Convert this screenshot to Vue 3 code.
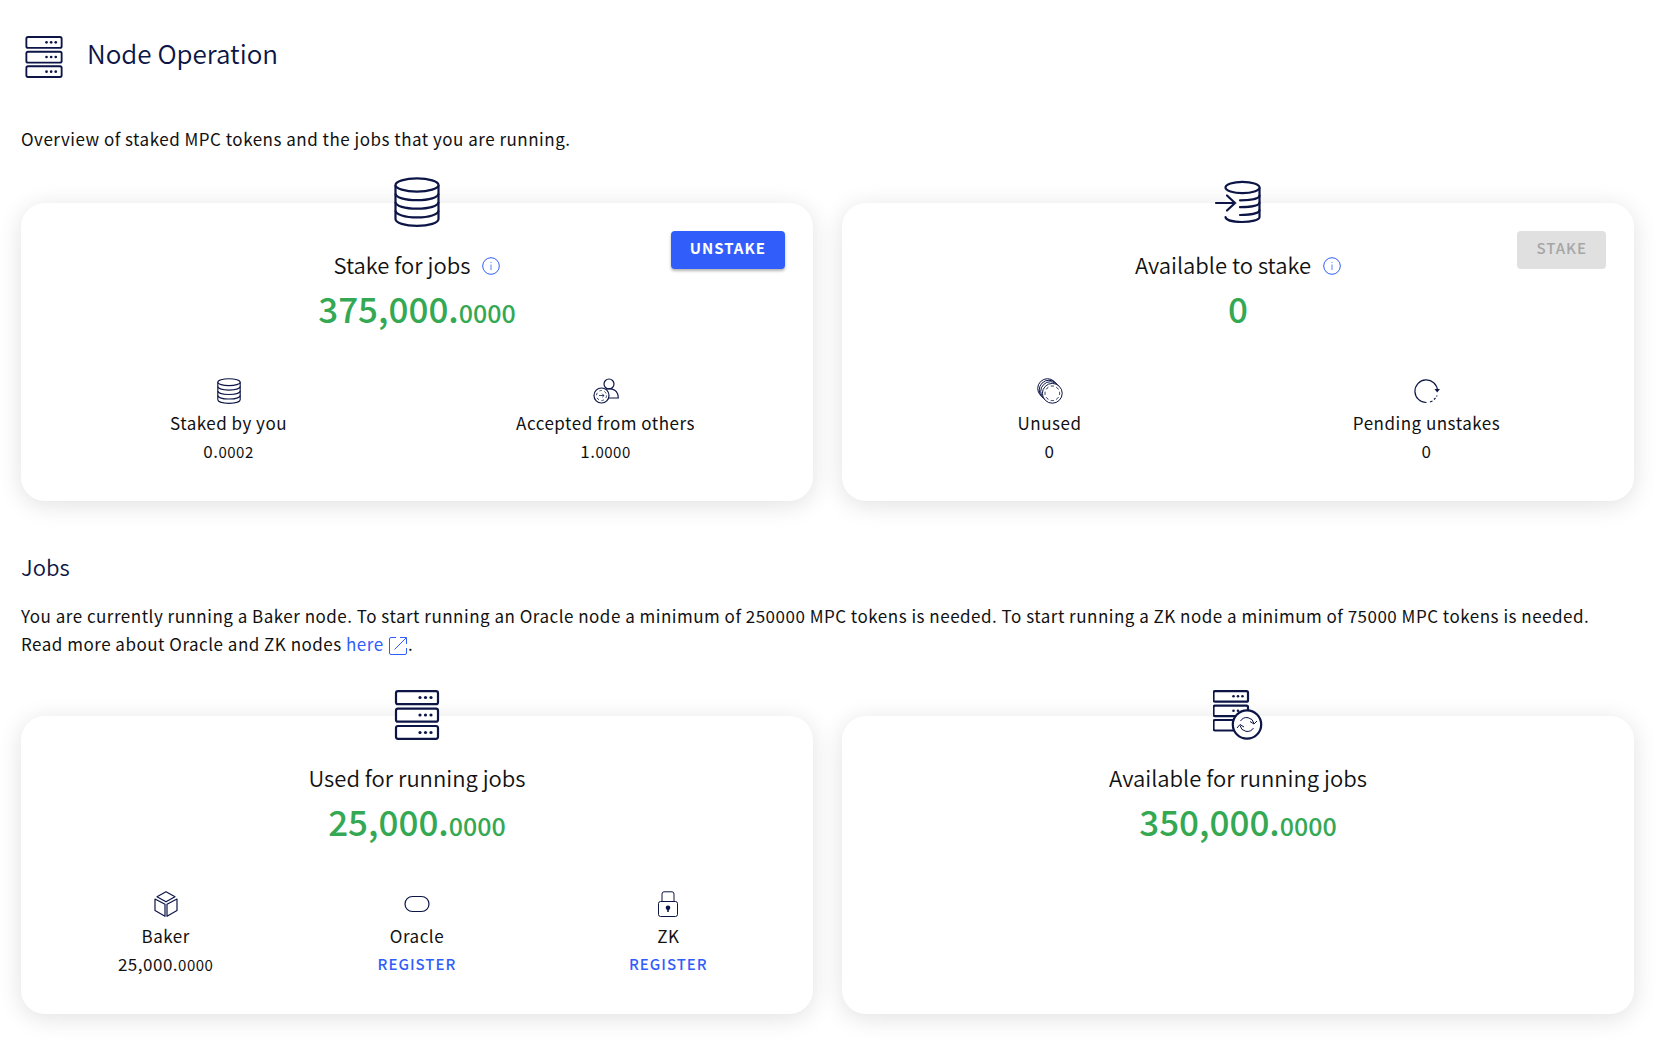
<script setup>
const stakes = [
  {
    id: 'staked',
    icon: 'stack',
    title: 'Stake for jobs',
    info: true,
    whole: '375,000.',
    decimals: '0000',
    action: { label: 'Unstake', disabled: false },
    items: [
      { icon: 'stack', label: 'Staked by you', whole: '0.', decimals: '0002' },
      { icon: 'others', label: 'Accepted from others', whole: '1.', decimals: '0000' },
    ],
  },
  {
    id: 'available',
    icon: 'deposit',
    title: 'Available to stake',
    info: true,
    whole: '0',
    action: { label: 'Stake', disabled: true },
    items: [
      { icon: 'coins', label: 'Unused', whole: '0' },
      { icon: 'pending', label: 'Pending unstakes', whole: '0' },
    ],
  },
]

const jobs = [
  {
    id: 'used',
    icon: 'servers',
    title: 'Used for running jobs',
    whole: '25,000.',
    decimals: '0000',
    items: [
      { icon: 'cube', label: 'Baker', whole: '25,000.', decimals: '0000' },
      { icon: 'oracle', label: 'Oracle', register: true },
      { icon: 'lock', label: 'ZK', register: true },
    ],
  },
  {
    id: 'free',
    icon: 'refresh',
    title: 'Available for running jobs',
    whole: '350,000.',
    decimals: '0000',
    items: [],
  },
]

const sections = { stakes, jobs }
</script>

<template>
  <svg class="symbols" aria-hidden="true">
    <symbol id="servers" viewBox="0 0 50 50">
      <g fill="#fff" stroke="currentColor" stroke-width="2.200">
        <rect x="4" y="1.200" width="42" height="13" rx="2" />
        <rect x="4" y="18.700" width="42" height="13" rx="2" />
        <rect x="4" y="36" width="42" height="12.800" rx="2" />
      </g>
      <g fill="currentColor">
        <circle cx="28" cy="7.500" r="1.600" /><circle cx="33.500" cy="7.500" r="1.600" /><circle cx="39" cy="7.500" r="1.600" />
        <circle cx="28" cy="25" r="1.600" /><circle cx="33.500" cy="25" r="1.600" /><circle cx="39" cy="25" r="1.600" />
        <circle cx="28" cy="42.500" r="1.600" /><circle cx="33.500" cy="42.500" r="1.600" /><circle cx="39" cy="42.500" r="1.600" />
      </g>
    </symbol>
    <symbol id="stack" viewBox="0 0 50 50">
      <g fill="#fff" stroke="currentColor" stroke-width="2.200">
        <path d="M3.500 8V42C3.500 46 13 48.800 25 48.800S46.500 46 46.500 42V8" />
        <ellipse cx="25" cy="8" rx="21.500" ry="6.600" />
        <path fill="none" d="M3.500 16.500C3.500 20.500 13 23.200 25 23.200S46.500 20.500 46.500 16.500M3.500 25C3.500 29 13 31.700 25 31.700S46.500 29 46.500 25M3.500 33.500C3.500 37.500 13 40.400 25 40.400S46.500 37.500 46.500 33.500" />
      </g>
    </symbol>
    <symbol id="deposit" viewBox="0 0 50 50">
      <path fill="#fff" d="M12 10H46V44H12z" />
      <g fill="#fff" stroke="currentColor" stroke-width="2.200" stroke-linecap="round">
        <path fill="none" d="M12.500 40C13 43 20 45 29 45S46.500 43 46.500 40V11" />
        <ellipse cx="29.500" cy="10.500" rx="17" ry="5.700" />
        <path fill="none" d="M27 23.300C36 23.300 46.500 22 46.500 18.500M27 30.200C36 30.200 46.500 29 46.500 25.500M27 38C36 38 46.500 36.500 46.500 33M3 26H22M14 18.500L22 26L14 33.500" />
      </g>
    </symbol>
    <symbol id="refresh" viewBox="1.500 0 50 50">
      <g fill="#fff" stroke="currentColor" stroke-width="2.200">
        <rect x="2" y="1.200" width="34.500" height="10.500" rx="1.500" />
        <rect x="2" y="15.700" width="34.500" height="10.500" rx="1.500" />
        <rect x="2" y="30" width="34.500" height="10.500" rx="1.500" />
      </g>
      <g fill="currentColor">
        <circle cx="22" cy="6.300" r="1.300" /><circle cx="26.500" cy="6.300" r="1.300" /><circle cx="31" cy="6.300" r="1.300" />
        <circle cx="22" cy="20.700" r="1.300" /><circle cx="26.500" cy="20.700" r="1.300" />
      </g>
      <circle cx="35.500" cy="34.500" r="14.200" fill="#fff" stroke="currentColor" stroke-width="2.200" />
      <path fill="none" stroke="currentColor" d="M29 31A7.400 7.400 0 0 1 42.500 33.500M38.500 31.500L42.500 34L45.500 31M42 38A7.400 7.400 0 0 1 28.500 35.500M25.500 38L28.500 34.500L32.500 37" />
    </symbol>
    <symbol id="others" viewBox="0 0 26 26">
      <g fill="none" stroke="currentColor" stroke-width="1.200">
        <circle cx="16" cy="6" r="5" />
        <path d="M13 11C20 9.500 25.300 13 25.300 20H16" />
        <circle cx="8.500" cy="17.500" r="7.500" fill="#fff" />
        <circle cx="8.500" cy="17.500" r="5" stroke-dasharray="2.500 2.700" stroke-width=".8" />
        <path stroke-width=".8" d="M6 17.500H11M9.200 15.700L11 17.500L9.200 19.300" />
      </g>
    </symbol>
    <symbol id="coins" viewBox="0 0 26 26">
      <g fill="#fff" stroke="currentColor">
        <circle cx="10.500" cy="10.500" r="9.800" />
        <circle cx="12" cy="12" r="9.800" />
        <circle cx="13.500" cy="13.500" r="9.800" />
        <circle cx="15.300" cy="15.300" r="9.900" />
        <circle cx="15.300" cy="15.300" r="7.300" stroke-width=".9" stroke-dasharray="3.200 2.500" stroke-dashoffset="1.600" />
      </g>
    </symbol>
    <symbol id="pending" viewBox="0 0 26 26">
      <g fill="none" stroke="currentColor" stroke-width="1.200">
        <path d="M12.500 24.500A11.300 11.300 0 1 1 23.500 12.500" />
        <path d="M16 24L18.500 23M20 21.500L21.500 20M22.500 18.500L23.200 17.500" />
      </g>
      <path fill="currentColor" d="M20.500 11H26L23.200 14.500z" />
    </symbol>
    <symbol id="cube" viewBox="0 0 26 26">
      <path fill="none" stroke="currentColor" stroke-width="1.200" stroke-linejoin="round" d="M13 .8L22 5.800L13 10.800L4 5.800zM2 8L12 13.300V25.300L2 19.600zM24 8L14 13.300V25.300L24 19.600z" />
    </symbol>
    <symbol id="oracle" viewBox="0 0 26 26">
      <rect x="1" y="5.500" width="24" height="15" rx="7.500" fill="none" stroke="currentColor" stroke-width="1.200" />
    </symbol>
    <symbol id="lock" viewBox="0 0 26 26">
      <rect x="3.500" y="10.500" width="19" height="15" rx="2" fill="none" stroke="currentColor" />
      <path fill="none" stroke="currentColor" d="M7 10.500V3Q7 .800 9 .800H17Q19 .800 19 3V10.500" />
      <circle cx="13" cy="16.800" r="2.300" fill="currentColor" />
      <path stroke="currentColor" stroke-width="1.600" d="M13 17V21" />
    </symbol>
  </svg>

  <main class="page">
    <header class="page-header">
      <svg class="page-icon" aria-hidden="true"><use href="#servers" /></svg>
      <h1>Node Operation</h1>
    </header>

    <template v-for="(cards, name) in sections" :key="name">
      <p v-if="name === 'stakes'" class="intro">
        Overview of staked MPC tokens and the jobs that you are running.
      </p>
      <section v-else class="jobs">
        <h2>Jobs</h2>
        <p>
          You are currently running a Baker node. To start running an Oracle node a minimum of
          250000 MPC tokens is needed. To start running a ZK node a minimum of 75000 MPC tokens is
          needed. Read more about Oracle and ZK nodes
          <a href="#nodes">here <svg class="external" viewBox="0 0 18 18" aria-hidden="true"><path d="M7 .5H2Q.5 .5 .5 2V16Q.5 17.500 2 17.500H16Q17.500 17.500 17.500 16V11M5.500 12.500L17 1M11 .5H17.500V7" /></svg></a>.
        </p>
      </section>

      <div class="cards">
        <article v-for="card in cards" :key="card.id" class="card">
          <svg class="card-icon" aria-hidden="true"><use :href="'#' + card.icon" /></svg>
          <button
            v-if="card.action"
            type="button"
            class="action"
            :disabled="card.action.disabled"
          >{{ card.action.label }}</button>
          <h3>
            {{ card.title }}
            <svg v-if="card.info" class="info" viewBox="0 0 18 18" aria-hidden="true">
              <circle cx="9" cy="9" r="8.300" />
              <path stroke-width=".8" d="M9 7.500V13M9 5V6" />
            </svg>
          </h3>
          <p class="total">{{ card.whole }}<small v-if="card.decimals">{{ card.decimals }}</small></p>
          <ul v-if="card.items.length" class="items">
            <li v-for="item in card.items" :key="item.label">
              <svg class="item-icon" aria-hidden="true"><use :href="'#' + item.icon" /></svg>
              <span>{{ item.label }}</span>
              <button v-if="item.register" type="button" class="register">Register</button>
              <span v-else class="value">{{ item.whole }}<small v-if="item.decimals">{{ item.decimals }}</small></span>
            </li>
          </ul>
        </article>
      </div>
    </template>
  </main>
</template>

<style>
body {
  margin: 0;
  background: #fff;
}
</style>

<style scoped>
.symbols {
  position: absolute;
  width: 0;
  height: 0;
}

.page {
  padding: 32px 28px 40px 21px;
  color: #111;
  font-family: "Noto Sans CJK SC", "Noto Sans", sans-serif;
  font-size: 17px;
  font-weight: 400;
  line-height: 28px;
  letter-spacing: 0.5px;
}

h1,
h2,
h3,
p,
ul {
  margin: 0;
  padding: 0;
}

h1,
h2,
h3 {
  font-weight: 350;
  letter-spacing: 0;
}

.page-header {
  display: flex;
  align-items: flex-start;
  gap: 20px;
  height: 48px;
  color: #0c1546;
}

.page-icon {
  width: 46px;
  height: 42px;
  margin-top: 4px;
}

h1 {
  font-size: 26px;
  line-height: 42px;
}

.intro {
  margin-top: 45px;
}

.cards {
  display: grid;
  grid-template-columns: 1fr 1fr;
  gap: 29px;
  margin-top: 50px;
}

.card {
  position: relative;
  box-sizing: border-box;
  padding: 46px 19px 36px;
  border-radius: 24px;
  background: #fff;
  box-shadow: 0 4px 24px rgba(0, 0, 0, 0.12);
  text-align: center;
}

.card-icon {
  position: absolute;
  top: -26px;
  left: 50%;
  width: 50px;
  height: 50px;
  margin-left: -25px;
  color: #0c1546;
}

.action {
  position: absolute;
  top: 28px;
  right: 28px;
  height: 38px;
  padding: 0 19px 6px;
  border: 0;
  border-radius: 4px;
  background: #315efb;
  box-shadow: 0 2px 3px rgba(0, 0, 0, 0.3);
  color: #fff;
  font-family: inherit;
  font-size: 15px;
  font-weight: 700;
  letter-spacing: 1px;
  text-transform: uppercase;
}

.action:disabled {
  background: #e0e0e0;
  box-shadow: none;
  color: #a6a6a6;
  font-weight: 500;
}

h3 {
  display: flex;
  align-items: center;
  justify-content: center;
  gap: 12px;
  margin-bottom: 4px;
  font-size: 22px;
  line-height: 30px;
}

.info {
  width: 18px;
  height: 18px;
  margin-top: 4px;
  fill: none;
  stroke: #315efb;
}

small {
  line-height: 1;
}

.total {
  color: #34a853;
  font-size: 35px;
  font-weight: 500;
  line-height: 50px;
  letter-spacing: 0;
}

.total small {
  font-size: 25px;
}

.items {
  display: flex;
  margin-top: 45px;
  list-style: none;
}

.items li {
  display: flex;
  flex: 1;
  flex-direction: column;
  align-items: center;
}

.item-icon {
  width: 26px;
  height: 26px;
  margin-bottom: 5px;
  color: #0c1546;
}

.value small {
  font-size: 15px;
}

.register {
  padding: 0;
  border: 0;
  background: none;
  color: #315efb;
  font-family: inherit;
  font-size: 15px;
  font-weight: 500;
  line-height: 28px;
  letter-spacing: 1px;
  text-transform: uppercase;
}

.jobs {
  margin-top: 47px;
  padding-bottom: 8px;
}

h2 {
  color: #0c1546;
  font-size: 22px;
  line-height: 36px;
}

.jobs p {
  margin-top: 18px;
}

a {
  color: #315efb;
  text-decoration: none;
}

.external {
  width: 18px;
  height: 18px;
  margin: 0 1px;
  vertical-align: -4px;
  fill: none;
  stroke: currentColor;
  stroke-width: 1;
}
</style>
